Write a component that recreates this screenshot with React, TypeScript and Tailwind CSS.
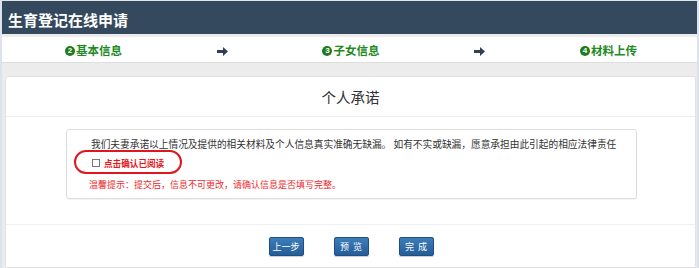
import React from "react";

const cjk = { fontFamily: '"Noto Sans CJK SC", "Noto Sans", sans-serif' };

function Step({ n, label }: { n: string; label: string }) {
  return (
    <div className="flex items-center justify-center">
      <span className="flex items-center">
        <span className="w-[10px] h-[10px] rounded-full bg-[#1c7d1c] text-white text-[8px] leading-none font-bold flex items-center justify-center mr-[1px]" style={{ fontFamily: '"Liberation Sans", sans-serif' }}>
          {n}
        </span>
        <span className="text-[11.5px] leading-none font-bold text-[#1f8a1f]">{label}</span>
      </span>
    </div>
  );
}

function Arrow() {
  return (
    <div className="flex items-center justify-center">
      <svg width="11" height="9" viewBox="0 0 11 9">
        <path d="M0 3 H6 V0 L11 4.5 L6 9 V6 H0 Z" fill="#2f4158" />
      </svg>
    </div>
  );
}

function Btn({ children }: { children: React.ReactNode }) {
  return (
    <button className="w-[35px] h-[19px] rounded-[2px] border border-[#1f4f82] bg-gradient-to-b from-[#3d7dbb] to-[#255d97] text-white text-[9px] leading-none flex items-center justify-center shadow-[0_1px_1px_rgba(0,0,0,0.2)]">
      {children}
    </button>
  );
}

export default function App() {
  return (
    <div className="w-[699px] h-[268px] overflow-hidden bg-[#dde3ec] flex" style={cjk}>
      <div className="ml-[2px] w-[695px] flex flex-col bg-[#f7f7f7]">
        <div className="h-[1px] bg-[#e4e4e4]" />
        <div className="h-[33px] bg-[#34495e] flex items-center pl-[6px] pt-[3px]">
          <span className="text-white text-[15px] font-bold leading-none">生育登记在线申请</span>
        </div>
        <div className="h-[3px] bg-[#ececec]" />
        <div className="h-[26px] bg-white border-b border-[#dedede] grid grid-cols-5 pl-[27px] pr-[24px] pt-[3px] items-center">
          <Step n="2" label="基本信息" />
          <Arrow />
          <Step n="3" label="子女信息" />
          <Arrow />
          <Step n="4" label="材料上传" />
        </div>
        <div className="flex-1 bg-[#ececec] pt-[13px] pl-[3px] pr-[1px]">
          <div className="h-full bg-white border border-[#e2e2e2] rounded-t-[3px] flex flex-col">
            <div className="h-[40px] border-b border-[#efefef] flex items-center justify-center pt-[2px]">
              <span className="text-[14.5px] text-[#333] leading-none">个人承诺</span>
            </div>
            <div className="pt-[12px] pb-[25px] pl-[60px] pr-[58px] border-b border-[#efefef]">
              <div className="relative h-[70px] border border-[#dcdcdc] rounded-[3px] shadow-[0_1px_1px_rgba(0,0,0,0.05)] pl-[24px] pt-[8px]">
                <div className="text-[9.7px] leading-[12px] text-[#333] whitespace-nowrap">
                  我们夫妻承诺以上情况及提供的相关材料及个人信息真实准确无缺漏。 如有不实或缺漏，愿意承担由此引起的相应法律责任
                </div>
                <div className="mt-[7px] flex items-center h-[12px]">
                  <span className="w-[8px] h-[8px] border border-[#777] bg-white mr-[4px] ml-[1px]" />
                  <span className="text-[8.6px] font-bold text-[#e8141c] leading-none">点击确认已阅读</span>
                </div>
                <div className="mt-[11px] -ml-[2px] text-[9px] leading-none text-[#f0282d] whitespace-nowrap">
                  温馨提示：提交后，信息不可更改，请确认信息是否填写完整。
                </div>
                <div className="absolute left-[7px] top-[20px] w-[108px] h-[24px] rounded-[12px] border-2 border-[#e0161e]" />
              </div>
            </div>
            <div className="pt-[12px] flex justify-center gap-[30px] pl-[1px]">
              <Btn>上一步</Btn>
              <Btn>预&nbsp;&nbsp;览</Btn>
              <Btn>完&nbsp;&nbsp;成</Btn>
            </div>
          </div>
        </div>
      </div>
    </div>
  );
}
